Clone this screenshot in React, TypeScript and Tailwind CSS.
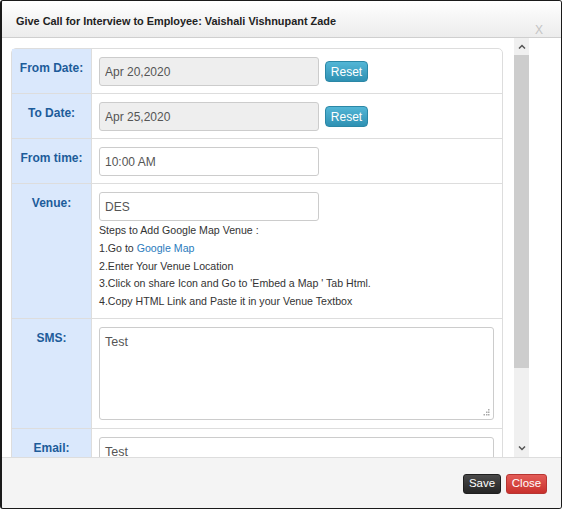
import React from 'react';

const labelCls =
  'w-[80px] shrink-0 bg-[#dae8fc] border-r border-[#dddddd] text-center pt-[10px] text-[12px] font-bold text-[#1d5c9a]';

const Row: React.FC<{ label: string; h?: string; children: React.ReactNode; last?: boolean }> = ({
  label,
  h,
  children,
  last,
}) => (
  <div className={`flex ${h ?? ''} ${last ? '' : 'border-b border-[#dddddd]'}`}>
    <div className={labelCls}>{label}</div>
    <div className="flex-1 pl-[7px] pt-[8px]">{children}</div>
  </div>
);

const ResetButton = () => (
  <button
    type="button"
    className="ml-[6px] mt-[4px] h-[21px] w-[43px] rounded-[4px] border border-[#2b87a6] bg-gradient-to-b from-[#53b6d6] to-[#2e91b3] text-[12px] text-white"
  >
    Reset
  </button>
);

const inputCls =
  'h-[29px] w-[220px] rounded-[3px] border border-[#cccccc] px-[5px] text-[12px] text-[#555555] outline-none';

const Grip = () => (
  <svg width="7" height="7" viewBox="0 0 7 7" className="absolute right-[4px] bottom-[4px]">
    <rect x="5" y="0" width="1.5" height="1.5" fill="#aaaaaa" />
    <rect x="3" y="2.5" width="1.5" height="1.5" fill="#aaaaaa" />
    <rect x="5" y="2.5" width="1.5" height="1.5" fill="#aaaaaa" />
    <rect x="0.5" y="5" width="1.5" height="1.5" fill="#aaaaaa" />
    <rect x="3" y="5" width="1.5" height="1.5" fill="#aaaaaa" />
    <rect x="5" y="5" width="1.5" height="1.5" fill="#aaaaaa" />
  </svg>
);

const TextBox: React.FC<{ value: string }> = ({ value }) => (
  <div className="relative w-[395px]">
    <textarea
      className="block h-[93px] w-full resize-none rounded-[3px] border border-[#cccccc] px-[5px] py-[5px] text-[12.5px] text-[#555555] outline-none"
      defaultValue={value}
    />
    <Grip />
  </div>
);

export default function App() {
  return (
    <div
      className="w-[562px] h-[509px] flex flex-col border border-l-2 border-[#1a1a1a] rounded-[3px] overflow-hidden bg-white"
      style={{ fontFamily: '"Liberation Sans", Arial, sans-serif' }}
    >
      {/* header */}
      <div className="h-[37px] shrink-0 flex items-start justify-between bg-gradient-to-b from-white to-[#ececec] border-b border-[#cfcfcf]">
        <h1 className="pl-[14px] pt-[12px] text-[10.9px] font-bold text-[#222222]">
          Give Call for Interview to Employee: Vaishali Vishnupant Zade
        </h1>
        <span className="pr-[18px] pt-[20px] text-[12px] text-[#c4c4c4]">X</span>
      </div>

      {/* body */}
      <div className="flex-1 flex min-h-0">
        <div className="flex-1 overflow-hidden pl-[9px] pt-[10px] pr-[11px]">
          <div className="rounded-t-[5px] border border-[#dddddd]">
            <Row label="From Date:" h="h-[45px]">
              <div className="flex">
                <input className={`${inputCls} bg-[#eeeeee]`} value="Apr 20,2020" readOnly disabled />
                <ResetButton />
              </div>
            </Row>
            <Row label="To Date:" h="h-[45px]">
              <div className="flex">
                <input className={`${inputCls} bg-[#eeeeee]`} value="Apr 25,2020" readOnly disabled />
                <ResetButton />
              </div>
            </Row>
            <Row label="From time:" h="h-[45px]">
              <input className={`${inputCls} bg-white`} value="10:00 AM" readOnly />
            </Row>
            <Row label="Venue:" h="h-[135px]">
              <input className={`${inputCls} bg-white`} value="DES" readOnly />
              <div className="mt-[1px] text-[10.6px] leading-[17.8px] text-[#333333]">
                <div>Steps to Add Google Map Venue :</div>
                <div>
                  1.Go to <a className="text-[#2a7bbd]">Google Map</a>
                </div>
                <div>2.Enter Your Venue Location</div>
                <div>3.Click on share Icon and Go to 'Embed a Map ' Tab Html.</div>
                <div>4.Copy HTML Link and Paste it in your Venue Textbox</div>
              </div>
            </Row>
            <Row label="SMS:" h="h-[110px]">
              <TextBox value="Test" />
            </Row>
            <Row label="Email:" h="h-[110px]" last>
              <TextBox value="Test" />
            </Row>
          </div>
        </div>

        {/* scrollbar */}
        <div className="w-[15px] shrink-0 mr-[32px] flex flex-col bg-[#f0f0f0]">
          <div className="h-[17px] flex items-center justify-center">
            <svg width="8" height="5" viewBox="0 0 8 5" className="text-[#555555]">
              <path d="M1 4.5 L4 1.5 L7 4.5" stroke="currentColor" strokeWidth="1.5" fill="none" />
            </svg>
          </div>
          <div className="h-[313px] bg-[#cdcdcd]" />
          <div className="flex-1" />
          <div className="h-[17px] flex items-center justify-center">
            <svg width="8" height="5" viewBox="0 0 8 5" className="text-[#555555]">
              <path d="M1 0.5 L4 3.5 L7 0.5" stroke="currentColor" strokeWidth="1.5" fill="none" />
            </svg>
          </div>
        </div>
      </div>

      {/* footer */}
      <div className="h-[51px] shrink-0 flex items-center justify-end gap-[5px] pr-[14px] pt-[2px] bg-[#f4f4f4] border-t border-[#dddddd]">
        <button
          type="button"
          className="h-[20px] w-[38px] rounded-[3px] border border-[#1f1f1f] bg-gradient-to-b from-[#4a4a4a] to-[#252525] text-[11.5px] text-white"
        >
          Save
        </button>
        <button
          type="button"
          className="h-[20px] w-[41px] rounded-[3px] border border-[#b73532] bg-gradient-to-b from-[#e35b57] to-[#c9302c] text-[11.5px] text-white"
        >
          Close
        </button>
      </div>
    </div>
  );
}
